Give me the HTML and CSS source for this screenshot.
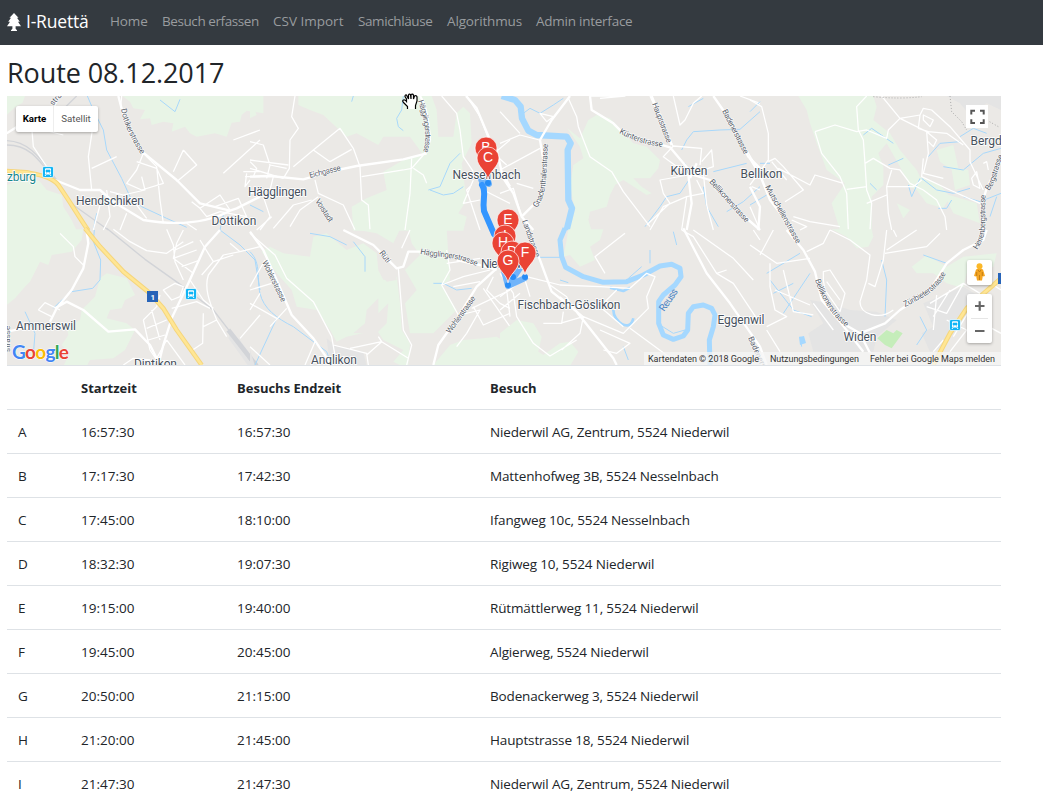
FILE: index.html
```html
<!DOCTYPE html>
<html lang="de">
<head>
<meta charset="utf-8">
<title>I-Ruettä</title>
<link rel="stylesheet" href="styles.css">
</head>
<body>
<nav class="navbar">
  <a class="brand"><svg class="tree" viewBox="0 0 14 18"><path d="M7 0 2.5 4.8H4L1.2 8.7H3L0 13.2H5.4V15.8L4 17.2V18H10V17.2L8.6 15.8V13.2H14L11 8.7H12.8L10 4.8H11.5Z"/></svg><span class="brand-name">I-Ruettä</span></a>
  <a class="link l1">Home</a><a class="link l2">Besuch erfassen</a><a class="link l3">CSV Import</a><a class="link l4">Samichläuse</a><a class="link l5">Algorithmus</a><a class="link l6">Admin interface</a>
</nav>
<main class="content">
<h1 class="title"><span>Route 08.12.2017</span></h1>
<div class="map">
<svg class="canvas" viewBox="7 96 994 269">
<defs>
  <g id="pin"><path class="pin" d="M0 0C-1-9-11-13-11-22A11 11 0 0 1 11-22C11-13 1-9 0 0Z"/></g>
  <g id="train"><rect x="-5.5" y="-5.5" width="11" height="11" rx="1.5" fill="#12b5f5" stroke="#fff" stroke-width=".7"/><rect x="-3" y="-3.8" width="6" height="6.3" rx="1" fill="#fff"/><path d="M-2-2H2V0H-2ZM-2 1h1M1 1h1" fill="#12b5f5" stroke="#12b5f5" stroke-width=".6"/><path d="M-2 2.5-3 4M2 2.5 3 4" stroke="#fff"/></g>
  <path id="haegg" d="M418 101C424 118 428 137 423 153"/>
  <path id="gnad" d="M537 208C548 193 546 172 548 143"/>
  <path id="haegg2" d="M420 254C440 258 457 256 478 267"/>
  <path id="kunt" d="M619 133C632 140 645 145 664 147"/>
  <path id="dott" d="M121 109C124 127 132 139 140 153"/>
  <path id="belli" d="M815 280C821 297 829 313 846 327"/>
  <path id="zuri" d="M905 307C922 298 938 291 946 273"/>
  <path id="bergs" d="M989 191C998 180 997 166 1004 155"/>
  <path id="herren" d="M977 250C990 232 983 216 986 193"/>
</defs>

<!-- north-west -->
<g class="tile" transform="translate(0 90) scale(.33333)">
  <path class="wood" d="M20 18H75L68 38 45 52 20 75ZM368 18H790V70L740 62 725 75 720 95 695 98 680 140 645 130 590 140 570 130 555 110 515 125 520 100 490 95 455 105 450 85 420 88 435 60 400 55 390 35ZM20 285 95 262 120 275 140 300 185 315 190 350 215 390 230 422H20Z"/>
  <path class="rail" d="M20 152C90 155 120 205 170 270M20 165C85 165 110 200 165 270M230 18 182 65 100 90M165 270 220 345 325 420"/>
  <path class="stream" d="M262 18 280 60 310 120 320 180 365 265 390 320 425 350 500 385 560 412M480 30 525 65 540 28M280 420 290 370M660 420 670 375"/>
  <path class="minor" d="M365 18 362 50 380 80M182 18 165 45 170 80 120 95 90 110M240 50 210 95 170 100M280 100 265 200 275 300M95 110 100 170 150 245M130 120 190 135M275 235 350 200M430 190 410 240 380 280 425 300 490 280 470 235 410 215M430 190 470 230 480 330 490 400M425 260 435 300 370 315 330 305M550 180 590 225 530 275M550 180 520 245M670 250 780 150M740 250 735 290 750 270M700 150 780 120M730 245H780M735 260H780M575 335 600 355 660 315 690 360M645 350 715 325 740 380 660 365M600 355 620 380 660 365M300 345 280 420M320 300 330 380 310 420M340 350 395 325 440 385M380 370 360 420M560 400 590 420"/>
  <path class="major" d="M355 18C380 120 400 160 430 188L530 270 600 340 690 362 710 355 780 320M165 270 240 300 300 300 340 335 430 390C520 405 610 405 690 362M20 130 60 105 90 110"/>
  <path class="hw-edge" d="M20 243 80 247C120 255 155 260 175 285C210 335 230 370 265 422"/>
  <path class="hw" d="M20 243 80 247C120 255 155 260 175 285C210 335 230 370 265 422"/>
</g>
<!-- south-west -->
<g class="tile" transform="translate(0 230) scale(.33333)">
  <path class="wood" d="M20-2H250L245 30 215 65 155 75 145 105 120 95 90 155 75 170 45 205 20 225ZM300 145 320 130 380 145 405 195 375 210 365 235 330 240 320 265 380 280 405 300 375 360 340 385 270 390 260 408H190L210 370 185 345 205 315 200 290 240 270 245 240 285 200Z"/>
  <path class="urban" d="M690 310 720 330 770 400V408H745L685 325Z"/>
  <path class="yard" d="M685 300 770 408"/>
  <path class="rail" d="M320-5 435 88 550 170 640 240 690 305 760 405"/>
  <path class="stream" d="M283 0 280 35 302 90 300 150 278 175 215 185 180 215 160 235M660 0 720 45 765 90 780 180M75 245 105 310 100 375"/>
  <path class="minor" d="M180 10 220 50 225 80 250 105M115 240 135 218 180 240M115 240 155 260M340-2 390 35 440 62 500 70 550 35M500-2 520 45 525 95 550 150M550 0 530 40 520 85 580 130M520 85 590 60M525 60 580 35M545 110 600 90M600 30 640 95 605 135M640 95 700 75M720 65 670 75 625 135C610 180 635 230 650 270L680 320M690 40 720 65 780 50M570 150 610 210 640 235M490 180 525 160 550 170 540 200 515 210ZM515 235 590 215 630 235M430 270 470 230 480 195M430 270 450 360 470 390M455 240 480 330M440 295 500 270M445 330 495 315M610 250 608 340 570 365M650 270 610 290M500 330 555 405M370 405 400 385 450 390M720 325 780 255M470 385 500 330"/>
  <path class="major" d="M260 5 265 40 250 115 215 180 170 235 150 275M165 235 200 215 250 240 325 305 405 298 450 345 480 405M660 0 615 50 565 160 515 265 490 345 475 405M20 305 85 292"/>
  <path class="hw-edge" d="M255-5 300 50 370 125 450 190 490 235 530 300 605 405"/>
  <path class="hw" d="M255-5 300 50 370 125 450 190 490 235 530 300 605 405"/>
</g>
<!-- north-centre -->
<g class="tile" transform="translate(250 90) scale(.33333)">
  <path class="wood" d="M0 18 20 75 0 85ZM145 18H545L560 60 565 140H610L620 70 640 50 660 70 665 160 635 220 650 330 625 370 650 380 640 422H310L305 350 350 325 410 300 400 245 460 210 520 195 480 140H400L385 165 320 130 290 140 220 75 180 60 145 45Z"/>
  <path class="stream" d="M460 18 455 60 440 85 445 110 460 122M535 300 570 290 600 220 630 190M540 300 580 315 610 310 640 290M310 18 305 35M0 345 40 365"/>
  <path class="minor" d="M135 18 125 80 145 115 120 150 118 235 100 265M0 155 40 165 60 225 110 235M0 235 100 265M0 210 115 225M10 260 20 235 0 215M60 225 50 265M130 230 190 180 270 115 310 175 330 230 335 330 355 345 360 420M190 180 240 215M240 215 305 178M335 260 460 240 485 235 520 195M485 205 480 310 465 420M490 235 520 255 530 280M575 18 620 70 630 120 640 200 670 245M650 18 690 80 715 145M670 270 640 340 690 330M715 205 780 150M665 285 650 300 690 420M700 300 780 340M195 270 205 310 280 345 315 420M205 320 150 360 120 410M185 330 130 345 70 415M40 320 60 380 30 420M70 260 60 300 0 310M770 225 720 180M20 420 65 380"/>
  <path class="major" d="M0 260 60 258 160 268 240 245 320 228 460 208 530 190M648 18 680 55 720 150 740 180 755 245 780 290"/>
  <path d="M525 190 540 150C535 90 530 50 510 18" class="major"/>
</g>
<!-- south-centre -->
<g class="tile" transform="translate(250 230) scale(.33333)">
  <path class="wood" d="M35 65 60 50 100 70 180 80 190 20 230 10 290 60 340 40 380 70 385 120 400 150 440 140 450 220 455 300 480 340 475 405H550L600 345 640 330 700 325 740 320 780 345V260 408H455L430 395 460 360 400 330 380 300 290 320 260 335 240 300 200 240 140 230 125 180 80 130ZM310-2H450L430 40 380 10ZM475-2H590L600 150 575 165 620 240 550 310 480 310 465 220 500 180 465 120 510 75 485 40Z"/>
  <path class="land" d="M385 205 350 240 345 280 310 310 380 310 410 280 415 220 385 250ZM385 120 430 110 440 150 410 155Z"/>
  <path class="urban" d="M230 325 260 350 340 365 350 408H240ZM0 360 15 408H0Z"/>
  <path class="stream" d="M0 65C35 100 20 150 30 190C40 235 80 265 130 290L230 365 245 405M80 265 15 405M180 10 240 20 290 45M310 35 345 80V125M550 160H580L620 180 665 175"/>
  <path class="minor" d="M0 10 75 75 110 145 190 215 245 320 260 405M45 90 0 170M65 160 0 180M30 190 0 240M110 235 60 290M80 265 0 220M0 350 60 405M165 405 195 335M250 345 350 370 355 405M300 355 395 335 475 385M385 320 395 335 350 375M445 115 460 300 485 345 470 405M480 0 455 55M590 60 600 120 575 165 625 255M590 100 690 85M575 165 640 140 720 120M690 155 610 170M665 235 780 180M670 230 700 285 780 250M730 140 710 180 750 220 780 235M630 255 690 240 650 310 620 350M700 175 780 290"/>
  <path class="major" d="M0 5 40 60 80 150 125 255 190 325 245 405M280 0 370 45 440 115 460 110 475 65 530 65M740 115 680 170 625 260 565 345 550 405M620 90 690 105 740 120"/>
</g>
<!-- north of the Reuss bend -->
<g class="tile" transform="translate(500 90) scale(.33333)">
  <path class="wood" d="M202 115 240 145 265 90 290 75 330 85 365 120 400 160 440 170 480 210 475 235 450 265 400 265 425 290 455 310 440 315 370 270 345 285 330 315 320 350 270 365 265 390 275 422H205L225 360 210 290 220 225 250 205 240 170Z"/>
  <path class="river" d="M5 18 45 30 62 50 66 85 85 122 110 135 200 140 212 160 203 180 205 330 216 355 200 420"/>
  <path class="stream" d="M70 70 90 55 120 70 160 45 190 25M565 50 610 25M545 180 560 150 580 125 660 120 720 118 780 65M640 245 740 220M555 220 570 265 540 310 500 320 480 350 435 410M680 365 730 335 780 290M610 290 620 350 655 410"/>
  <path class="minor" d="M0 65 60 130M0 160 60 135 118 150M205 25 230 80 235 110 270 200 335 245 370 305 450 410M270 18H375L300 25M450 18 520 170M605 18 580 40 555 90 540 105 520 18M520 168 490 200 565 255 640 230 635 180 605 215M520 168 605 175 600 225M565 255 480 270 490 310 510 340 440 405M590 270 610 310 560 320 490 350 450 420M560 320 545 420M610 250 620 345 640 420M120 70 160 80 140 95ZM0 240 120 175M0 310 40 295 65 380M100 295 50 280M720 18 780 40M740 180 760 215M755 290 780 300"/>
  <path class="major" d="M0 250 40 310 65 380 100 420M210 18 155 90 120 150 135 240 125 320 65 380M270 18 275 60 340 100 370 130 510 172 580 255 630 270 700 350 780 420M455 18 515 165M640 18 690 90 745 200 780 235M565 255 575 340 560 420M590 220 570 265"/>
</g>
<g class="tile" transform="translate(500 230) scale(.33333)">
  <path class="wood" d="M205-2H310L300 30 270 50 285 90 240 110 210 75 190 80 200 30ZM0 310 50 270 100 280 125 320 115 365 130 375 180 340 210 335 235 365 210 408H0Z"/>
  <path class="river bend" d="M195-5 180 30 185 80 197 112 250 140 310 157 380 155 430 135 480 108 515 103 540 115 543 140 525 165 490 195 476 215V280L490 315 520 328 550 318 563 300 565 250 580 230 610 225 635 235 645 255 640 290 628 330 630 410"/>
  <path class="oxbow" d="M340 240C340 275 390 310 400 265M330 173 370 183 390 173"/>
  <path class="stream" d="M480 285 520 310 555 300M450 100V60M520 5 530 45M385 145 425 110M80 82H185M370 350 385 390M180 150 205 158"/>
  <path class="minor" d="M0 130 40 190 50 260 100 340 150 378 230 330M0 240 60 190M20 180 30 260M75 150 90 200M0 200 80 140 180 165 300 170 390 175 440 130 465 140 440 200 445 235 370 310 250 260 180 200M315 130 285 80 375 10M150 165 200 200 215 230 300 230 370 290M180 280 250 260 240 310 185 360M300 230 350 180M190 245 185 280 130 280M300 300 390 340 350 370 310 360M545 0 580 20 650 130 700 160 780 280M580 0 700 85 760 150M760 0 780 30M650 130 680 120M390 295 540 405"/>
  <path class="major" d="M80-5 120 90 155 185 230 245 340 385 350 405M550-5 620 130 690 220 780 350 800 405"/>
</g>
<!-- north-east -->
<g class="tile" transform="translate(750 90) scale(.33333)">
  <path class="wood" d="M145 18H370L380 50 370 90 420 130 450 180 500 240 510 260 570 285 600 320 580 355 530 340 500 300 480 290 450 230 410 160 385 190 400 230 400 285 365 320 365 422H270L245 340 285 280 230 240 200 160 180 100 170 60ZM560 180 610 165 625 235 655 240 660 285 615 300 605 240 570 215ZM580 310 680 340 690 400 610 370ZM440 340 480 360 460 385Z"/>
  <path class="urban" d="M590 18H753V60L710 40 660 75 630 40Z"/>
  <path class="stream" d="M340 135 365 115 430 160M535 200 570 160 630 155M580 230 640 240 700 190 753 175M630 140 670 115 710 130M515 265 560 300 610 310 660 295M480 290 475 285 485 320 510 265M415 225 460 205M360 280 380 300M565 355 590 355 605 330M640 320 690 335 753 310M720 380 740 320M0 345 50 315M0 65 30 35M30 220H60"/>
  <path class="minor" d="M0 30 35 50 55 130V210L0 285M350 18 320 50 325 120 340 150 345 220 350 300 365 340 360 420M195 125 255 105 320 125 350 120 410 145 415 120 450 85 510 75 520 55 545 60 600 110 660 180 660 215 700 300M195 125 215 190 270 260 290 310 295 420M345 220 370 205 420 235 450 240 480 280 520 300 560 330 585 380 590 420M425 240 410 290 415 370 425 420M410 290 490 290 515 270M290 298 350 290M350 340 410 315M395 18 450 85 530 125 535 190 520 250 580 265M510 75 505 115 535 125 590 130 640 165M530 125 560 150 550 170 535 155M520 205 515 260 600 300 690 340M665 265 680 245 690 295 670 285ZM700 220 710 215 715 240M55 215 75 205 100 230 160 300 105 335M65 215 110 270M85 235 180 285 195 255 280 280M0 350 30 420M125 390 170 410 150 420M130 380 180 395 270 410M450 85 415 120M520 90 540 110 550 90 520 75Z"/>
  <path class="major" d="M0 205 30 255 60 330 130 420M0 290 30 350 25 420M753 210 710 295 695 345 700 420"/>
  <path class="border" d="M370 20Q450 28 515 20M600 18 605 65 635 95 650 120M650 75 710 90 745 110"/>
</g>
<!-- south-east -->
<g class="tile" transform="translate(750 230) scale(.33333)">
  <path class="wood" d="M245-2H365L370 20 355 50 320 55 290 20ZM485 110 530 75 590 110 640 80 740 70 730 110 650 130 640 175 590 160 550 130 500 130Z"/>
  <path class="urban" d="M180 210 240 220 300 240 380 245 440 270 380 320 370 365H190L175 310 220 280ZM520 220 640 170 690 200 650 260 580 350 540 365 515 310 550 290Z"/>
  <path class="park" d="M382 325 410 300 430 310 440 300 458 310 425 355 405 345Z"/>
  <path class="stream" d="M50 130 150 70M60 150 130 240 185 260M100 250 180 130M70 190 130 160M150 320 155 350M395 90 410 150 405 260M500 345 530 300 510 260M520 75 590 100"/>
  <path class="minor" d="M0 45 80 100 180 85M30 75 70 0M60 100 60 170 75 240 110 260 50 290M75 180 180 225M100 120 130 245 190 255M170 65 220 40 240 0M240 0 300 30 360 75 350 150 330 215C330 255 390 270 430 240M355 160 375 170 400 90 410 0M405 70 530 50 570 10M410 60 500 0M430 0 440 20M220 125 240 120 285 190 270 245 225 180 220 150ZM230 155 270 210M190 220 250 300M540 220 640 160 590 250 530 230M560 195 550 300M640 160 690 190 610 320M590 270 650 300 600 365M0 320 50 405M50 300 90 365M690 140 753 180M660 260 753 310M550 260 600 180M580 330 550 365"/>
  <path class="major" d="M110 0 160 60 195 125 215 210 270 275 330 310 360 370M330 310 405 280 450 240 540 180 590 100 640 60 700 30 710 0M270 275 340 365"/>
  <path class="hw-edge" d="M550 405 600 310 650 235 753 145"/>
  <path class="hw" d="M550 405 600 310 650 235 753 145"/>
</g>
<path class="route glow" d="M489 184 487 177 481 179 484 188M504 271 508 286 525 278M512 280 520 268"/>
<path class="route" d="M482 185C487 193 482 198 484 211L494 234 503 244"/>
<path class="routed" d="M488 183v.1M508 285v.1M525 277v.1M513 277v.1"/>
<path class="river-pond" d="M799 337 804 336 806 343 800 345Z"/>

<g class="town">
  <text x="7" y="181" textLength="29" class="city">zburg</text>
  <text x="76" y="205" textLength="68">Hendschiken</text><text x="211.500" y="225" textLength="45">Dottikon</text>
  <text x="248" y="195.500" textLength="59">Hägglingen</text><text x="16" y="330" textLength="60">Ammerswil</text>
  <text x="134" y="368" textLength="43">Dintikon</text><text x="311" y="364" textLength="46">Anglikon</text>
  <text x="452.500" y="178.500" textLength="68">Nesselnbach</text><text x="481" y="268" textLength="45">Niederwil</text>
  <text x="517.500" y="308.500" textLength="103">Fischbach-Göslikon</text><text x="670.500" y="174.500" textLength="37">Künten</text>
  <text x="740.500" y="178" textLength="42">Bellikon</text><text x="717.500" y="323.500" textLength="47">Eggenwil</text>
  <text x="843.500" y="340.500" textLength="33">Widen</text><text x="970.500" y="144.500">Bergdietikon</text>
</g>
<g class="road">
  <text><textPath href="#dott" textLength="50">Dottikerstrasse</textPath></text>
  <text transform="translate(310 178) rotate(-14)" textLength="32">Eichgasse</text>
  <text transform="translate(315 201) rotate(57)" textLength="26">Vorstadt</text>
  <text transform="translate(379 253) rotate(53)" textLength="13">Rüti</text>
  <text transform="translate(262 262) rotate(64)" textLength="45">Wohlerstrasse</text>
  <text transform="translate(450 334) rotate(-54)" textLength="44">Wohlerstrasse</text>
  <text><textPath href="#haegg" textLength="52">Hägglingerstrasse</textPath></text>
  <text><textPath href="#haegg2" textLength="58">Hägglingerstrasse</textPath></text>
  <text><textPath href="#gnad" textLength="66">Gnadenthalerstrasse</textPath></text>
  <text transform="translate(522 221) rotate(70)" textLength="39">Landstrasse</text>
  <text><textPath href="#kunt" textLength="46">Künterstrasse</textPath></text>
  <text transform="translate(652 104) rotate(69)" textLength="42">Hauptstrasse</text>
  <text transform="translate(722 111) rotate(63)" textLength="49">Badenerstrasse</text>
  <text transform="translate(709 182) rotate(48)" textLength="55">Bellikonerstrasse</text>
  <text transform="translate(765 187) rotate(61)" textLength="65">Mutschellenstrasse</text>
  <text><textPath href="#belli" textLength="57">Bellikonerstrasse</textPath></text>
  <text><textPath href="#zuri" textLength="54">Züribieterstrasse</textPath></text>
  <text><textPath href="#bergs" textLength="38">Bergstrasse</textPath></text>
  <text><textPath href="#herren" textLength="57">Herrenbergstrasse</textPath></text>
  <text transform="translate(748 338) rotate(66)">Badenerstr.</text>
  <text transform="translate(53 106) rotate(-48)">strasse</text>
  <text transform="translate(10 352) rotate(-90)">strasse</text>
  <text class="reuss" transform="translate(664 312) rotate(-55)" textLength="25">Reuss</text>
</g>
<use href="#train" x="48" y="172"/><use href="#train" x="191" y="294"/><use href="#train" x="955" y="325"/>
<rect x="147" y="291" width="11" height="11" fill="#2864b8"/><text x="150.5" y="300" class="shield">1</text>
<rect x="998" y="273" width="11" height="11" fill="#2864b8"/>

<g class="pins">
  <use href="#pin" x="486" y="170"/><text x="486" y="152">B</text>
  <use href="#pin" x="488" y="180"/><text x="488" y="162">C</text>
  <use href="#pin" x="508" y="242"/><text x="508" y="224">E</text>
  <use href="#pin" x="505" y="258"/><text x="505" y="240">I</text>
  <use href="#pin" x="503" y="265"/><text x="503" y="247">H</text>
  <use href="#pin" x="512" y="274"/><text x="512" y="256">D</text>
  <use href="#pin" x="525" y="275"/><text x="525" y="257">F</text>
  <use href="#pin" x="508" y="283"/><text x="508" y="265">G</text>
</g>
<text y="359" x="12" class="google" textLength="57"><tspan fill="#4285f4">G</tspan><tspan fill="#ea4335">o</tspan><tspan fill="#fbbc05">o</tspan><tspan fill="#4285f4">g</tspan><tspan fill="#34a853">l</tspan><tspan fill="#ea4335">e</tspan></text>
<rect x="644" y="352" width="357" height="13" fill="#f5f5f5" opacity=".75"/>
<g class="legal"><text x="648" y="362" textLength="111">Kartendaten © 2018 Google</text><text x="770" y="362" textLength="89">Nutzungsbedingungen</text><text x="870" y="362" textLength="125">Fehler bei Google Maps melden</text></g>
</svg>
<div class="types"><span class="type on">Karte</span><span class="type">Satellit</span></div>
<div class="full"><svg viewBox="0 0 22 22"><path d="M5.300 9V5.300H9M14 5.300h3.700V9M17.700 13.700v3.700H14M9 17.400H5.300V13.700" fill="none" stroke="#555" stroke-width="2"/></svg></div>
<div class="peg"><svg viewBox="0 0 25 25"><path d="M9 9.5Q12.5 7.5 16 9.5L18 16 16 16.5V15L15 20.5H10L9 15V16.5L7 16Z" fill="#f5a623"/><path d="M11 10 12.5 12 14 10M12.5 15V20M9.7 12V16M15.3 12V16" stroke="#b87512" stroke-width=".8" fill="none"/><circle cx="12.5" cy="6.3" r="3" fill="#fbb829"/></svg></div>
<div class="zoom"><svg viewBox="0 0 25 49"><path d="M8 12H17.5M12.7 7.3V16.7M8 37H17.5" stroke="#666" stroke-width="2.2"/><path d="M4 24.5H21" stroke="#e6e6e6"/></svg></div>
<svg class="hand" viewBox="0 0 17 17"><path d="M5.5 16V13.5L1.5 9.5Q0 7.5 1.5 7T4.5 8.5V6L3 3.5Q3 1.5 4.5 2L6.5 6V2Q7 .5 8.5 1.5L9 6V1.5Q10.5.5 11.5 2V6L12.5 3Q14.5 2 15 4V8L13.5 12.5V16" fill="#fff" stroke="#000" stroke-width="1.2"/></svg>
</div>
<table class="visits">
<colgroup><col class="c1"><col class="c2"><col class="c3"><col></colgroup>
<thead><tr><th></th><th>Startzeit</th><th>Besuchs Endzeit</th><th>Besuch</th></tr></thead>
<tbody>
<tr><td>A</td><td>16:57:30</td><td>16:57:30</td><td>Niederwil AG, Zentrum, 5524 Niederwil</td></tr>
<tr><td>B</td><td>17:17:30</td><td>17:42:30</td><td>Mattenhofweg 3B, 5524 Nesselnbach</td></tr>
<tr><td>C</td><td>17:45:00</td><td>18:10:00</td><td>Ifangweg 10c, 5524 Nesselnbach</td></tr>
<tr><td>D</td><td>18:32:30</td><td>19:07:30</td><td>Rigiweg 10, 5524 Niederwil</td></tr>
<tr><td>E</td><td>19:15:00</td><td>19:40:00</td><td>Rütmättlerweg 11, 5524 Niederwil</td></tr>
<tr><td>F</td><td>19:45:00</td><td>20:45:00</td><td>Algierweg, 5524 Niederwil</td></tr>
<tr><td>G</td><td>20:50:00</td><td>21:15:00</td><td>Bodenackerweg 3, 5524 Niederwil</td></tr>
<tr><td>H</td><td>21:20:00</td><td>21:45:00</td><td>Hauptstrasse 18, 5524 Niederwil</td></tr>
<tr><td>I</td><td>21:47:30</td><td>21:47:30</td><td>Niederwil AG, Zentrum, 5524 Niederwil</td></tr>
</tbody>
</table>
</main>
</body>
</html>
```
FILE: styles.css
```css
* { box-sizing: border-box; }
body { margin: 0; height: 812px; overflow: hidden; background: #fff; color: #212529; font: 13.5px/21px "Open Sans", "Noto Sans", sans-serif; }
.navbar { height: 45px; background: #343a40; display: flex; align-items: center; padding: 0 7px 2px; white-space: nowrap; }
.brand { display: flex; align-items: center; width: 103px; color: #fff; font-size: 17.5px; }
.brand-name { margin-left: 5px; letter-spacing: -.2px; }
.tree { width: 14px; height: 18px; fill: #fff; }
.link { color: #999c9f; }
.l1 { width: 52px; letter-spacing: -.1px; }
.l2 { width: 111px; letter-spacing: -.42px; }
.l3 { width: 85px; }
.l4 { width: 89px; letter-spacing: -.4px; }
.l5 { width: 89px; letter-spacing: -.15px; }
.l6 { letter-spacing: -.25px; }
.content { width: 994px; margin-left: 7px; }
.title { margin: 0; height: 51px; padding-top: 11px; font-size: 27px; line-height: 34px; font-weight: 400; letter-spacing: -.1px; }
.map { position: relative; height: 269px; background: #ebe9e6; overflow: visible; }
.canvas { display: block; width: 994px; height: 269px; }
.tile path { fill: none; stroke-linejoin: round; }
.tile .wood { fill: #e8f4e6; }
.tile .land { fill: #ebe9e6; }
.tile .urban { fill: #e4e4e4; }
.tile .park { fill: #c5edba; }
.tile .stream { stroke: #a8d8fb; stroke-width: 3; }
.tile .river { stroke: #a5d8ff; stroke-width: 19; }
.tile .river.bend { stroke-width: 15; }
.tile .oxbow { stroke: #a5d8ff; stroke-width: 8; }
.tile .minor { stroke: #fff; stroke-width: 3.8; }
.tile .major { stroke: #fff; stroke-width: 7; }
.tile .rail { stroke: #d2d4d8; stroke-width: 4; }
.tile .yard { stroke: #d2d4d8; stroke-width: 14; }
.tile .hw-edge { stroke: #f6d67c; stroke-width: 14; }
.tile .hw { stroke: #ffe694; stroke-width: 8; }
.tile .border { stroke: #aaa; stroke-width: 3; stroke-dasharray: 3 6; }
.river-pond { fill: #a5d8ff; }
.route { fill: none; stroke: #3496ff; stroke-width: 6; stroke-linejoin: round; stroke-linecap: round; }
.route.glow { stroke: #70b4fa; }
.routed { fill: none; stroke: #278cf5; stroke-width: 6; stroke-linecap: round; }
.canvas text { font-family: Roboto, sans-serif; }
.town text { font-size: 12px; fill: #46505c; stroke: #fff; stroke-width: 1.5px; paint-order: stroke; }
.town .city { fill: #16858b; }
.road text { font-size: 8px; fill: #59616b; stroke: #fff; stroke-width: 1px; paint-order: stroke; }
.road .reuss { font-size: 10px; fill: #4a84c4; stroke: none; }
.canvas .shield { font-size: 8px; font-weight: 700; fill: #fff; }
.pin { fill: #ea4335; stroke: #fff; stroke-width: .7; }
.canvas .pins text { fill: #fff; font: 14px "Liberation Sans", sans-serif; text-anchor: middle; }
.canvas .google { font: 19px Lato, sans-serif; font-weight: 700; stroke: #fff; stroke-width: 1px; paint-order: stroke; }
.legal text { font-size: 9px; fill: #333; }
.types { position: absolute; left: 9px; top: 10px; height: 26px; display: flex; background: #fff; border-radius: 2px; box-shadow: 0 1px 3px rgba(0,0,0,.3); font: 9.7px/26px Roboto, sans-serif; color: #565656; }
.type { width: 44px; text-align: center; }
.type.on { width: 38px; color: #000; font-weight: 700; border-right: 1px solid #eee; }
.full, .peg, .zoom { position: absolute; background: #fff; }
.full { left: 959px; top: 9px; width: 22px; height: 23px; }
.peg { left: 960px; top: 164px; width: 25px; height: 25px; border-radius: 2px; box-shadow: 0 1px 3px rgba(0,0,0,.3); }
.zoom { left: 960px; top: 198px; width: 25px; height: 49px; border-radius: 2px; box-shadow: 0 1px 3px rgba(0,0,0,.3); }
.full svg, .peg svg, .zoom svg { display: block; width: 100%; height: 100%; }
.hand { position: absolute; left: 395px; top: -3px; width: 17px; height: 17px; }
.visits { width: 994px; border-collapse: collapse; table-layout: fixed; }
.c1 { width: 63px; }
.c2 { width: 156px; }
.c3 { width: 253px; }
.visits th, .visits td { height: 44px; padding: 2px 11px 0; border-top: 1px solid #dee2e6; text-align: left; white-space: nowrap; }
.visits td:last-child { letter-spacing: -.14px; }
.visits th { font-weight: 700; font-size: 13px; }
```
